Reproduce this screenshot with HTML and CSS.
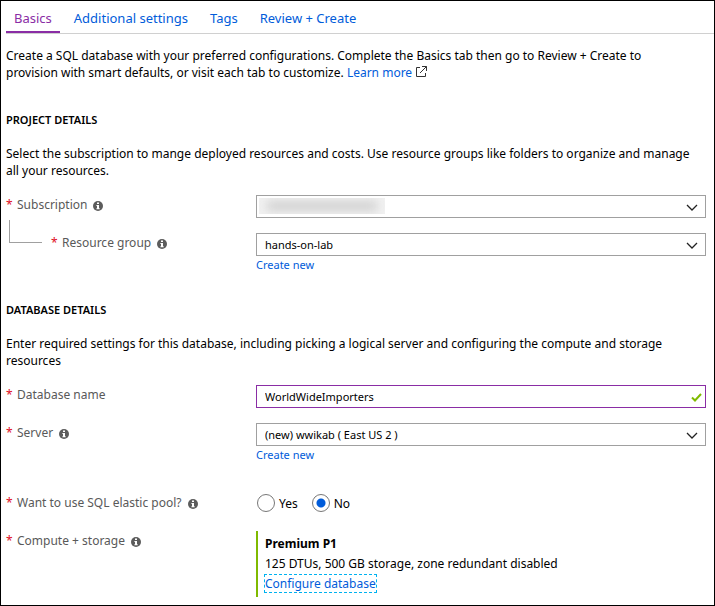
FILE: index.html
```html
<!DOCTYPE html>
<html lang="en">
<head>
<meta charset="utf-8">
<meta name="viewport" content="width=device-width, initial-scale=1">
<title>Create SQL Database</title>
<link rel="stylesheet" href="styles.css">
</head>
<body>
<svg class="sprite" aria-hidden="true">
  <symbol id="info" viewBox="0 0 10 10">
    <circle cx="5" cy="5" r="5" fill="#5c5c5c"/>
    <path d="M4 1.4h2v1.5H4zM3.4 4H6v3.3h.7v1H3.4v-1H4V5h-.6z" fill="#fff"/>
  </symbol>
  <symbol id="chevron" viewBox="0 0 12 8">
    <path d="M1 1l5 5 5-5" fill="none" stroke="#222" stroke-width="1.3"/>
  </symbol>
</svg>

<nav class="tabs">
  <a class="tab tab-active" href="#basics" aria-current="page">Basics</a>
  <a class="tab" href="#settings">Additional settings</a>
  <a class="tab" href="#tags">Tags</a>
  <a class="tab" href="#review">Review + Create</a>
</nav>

<main class="content">
  <p class="text">Create a SQL database with your preferred configurations. Complete the Basics tab then go to Review + Create to provision with smart defaults, or visit each tab to customize. <a class="link" href="#learn">Learn more<svg class="external" viewBox="0 0 11 11" aria-hidden="true"><path d="M4 1.5H.5v9h9V7M6 .5h4.5V5M10.5 .5L4 7" fill="none" stroke="#333"/></svg></a></p>

  <section class="section">
    <h2 class="heading">PROJECT DETAILS</h2>
    <p class="text">Select the subscription to mange deployed resources and costs. Use resource groups like folders to organize and manage all your resources.</p>
    <div class="row row-first">
      <label class="label" for="subscription"><span class="star">*</span>Subscription<svg class="info"><use href="#info"/></svg></label>
      <div class="select">
        <select id="subscription"><option></option></select>
        <span class="redacted"></span>
        <svg class="chevron" aria-hidden="true"><use href="#chevron"/></svg>
      </div>
    </div>
    <div class="row">
      <div class="nested">
        <span class="branch"></span>
        <label class="label" for="group"><span class="star">*</span>Resource group<svg class="info"><use href="#info"/></svg></label>
      </div>
      <div>
        <div class="select">
          <select id="group"><option>hands-on-lab</option></select>
          <svg class="chevron" aria-hidden="true"><use href="#chevron"/></svg>
        </div>
        <a class="link create" href="#new-group">Create new</a>
      </div>
    </div>
  </section>

  <section class="section">
    <h2 class="heading">DATABASE DETAILS</h2>
    <p class="text">Enter required settings for this database, including picking a logical server and configuring the compute and storage resources</p>
    <div class="row row-first">
      <label class="label" for="name"><span class="star">*</span>Database name</label>
      <div class="select">
        <input class="input" id="name" type="text" value="WorldWideImporters">
        <svg class="check" viewBox="0 0 11 9" aria-hidden="true"><path d="M1 4.5l3 3L10 1" fill="none" stroke="#7fba00" stroke-width="2"/></svg>
      </div>
    </div>
    <div class="row">
      <label class="label" for="server"><span class="star">*</span>Server<svg class="info"><use href="#info"/></svg></label>
      <div>
        <div class="select">
          <select id="server"><option>(new) wwikab ( East US 2 )</option></select>
          <svg class="chevron" aria-hidden="true"><use href="#chevron"/></svg>
        </div>
        <a class="link create" href="#new-server">Create new</a>
      </div>
    </div>
    <div class="row row-pool" role="radiogroup" aria-labelledby="pool">
      <span class="label" id="pool"><span class="star">*</span>Want to use SQL elastic pool?<svg class="info"><use href="#info"/></svg></span>
      <div class="radios">
        <label class="radio"><input type="radio" name="pool">Yes</label>
        <label class="radio"><input type="radio" name="pool" checked>No</label>
      </div>
    </div>
    <div class="row row-compute">
      <span class="label"><span class="star">*</span>Compute + storage<svg class="info"><use href="#info"/></svg></span>
      <div class="summary">
        <strong>Premium P1</strong>
        <span>125 DTUs, 500 GB storage, zone redundant disabled</span>
        <a class="link configure" href="#configure">Configure database</a>
      </div>
    </div>
  </section>
</main>
</body>
</html>
```
FILE: styles.css
```css
* {
  box-sizing: border-box;
}

body {
  margin: 0;
  min-height: 100vh;
  border: 1px solid #000;
  padding-left: 5px;
  background: #fff;
  color: #000;
  font: 12px/17px "Noto Sans", "Open Sans", sans-serif;
}

.sprite {
  display: none;
}

.tabs {
  display: flex;
  gap: 6px;
  border-bottom: 1px solid #d0d0d0;
  font-size: 13px;
  line-height: 18px;
}

.tab {
  padding: 8px 8px 4px;
  border-bottom: 2px solid transparent;
  color: #015cda;
  text-decoration: none;
}

.tab-active {
  color: #8a2da5;
  border-color: #8a2da5;
}

.content {
  padding: 13px 8px 8px 0;
}

.text {
  margin: 0;
  padding-right: 16px;
}

.link {
  color: #015cda;
  text-decoration: none;
}

.external {
  width: 11px;
  height: 11px;
  margin-left: 4px;
}

.section {
  padding-top: 30px;
}

.section + .section {
  padding-top: 28px;
}

.heading {
  margin: 0 0 17px;
  font-size: 11px;
  line-height: 17px;
  font-weight: 600;
}

.row {
  display: grid;
  grid-template-columns: 250px minmax(0, 1fr);
  align-items: start;
  margin-top: 15px;
}

.row-first {
  margin-top: 16px;
}

.label {
  display: flex;
  align-items: center;
  height: 18px;
  color: #595959;
}

.star {
  width: 11px;
  color: #e00b1c;
}

.info {
  width: 10px;
  height: 10px;
  margin: 3px 0 0 6px;
}

.nested {
  display: flex;
  gap: 9px;
}

.branch {
  width: 33px;
  height: 23px;
  margin: -13px 0 0 3px;
  border: solid #a0a0a0;
  border-width: 0 0 1px 1px;
}

.select {
  position: relative;
}

select,
.input {
  display: block;
  width: 100%;
  height: 23px;
  margin: 0;
  padding: 0 28px 0 8px;
  border: 1px solid #a0a0a0;
  border-radius: 0;
  outline: 0;
  background: #fff;
  color: #000;
  font: inherit;
  font-size: 11px;
  appearance: none;
}

.input {
  border-color: #8a2da5;
}

.chevron,
.check {
  position: absolute;
  pointer-events: none;
}

.chevron {
  top: 9px;
  right: 8px;
  width: 12px;
  height: 8px;
}

.check {
  top: 8px;
  right: 4px;
  width: 11px;
  height: 9px;
}

.redacted {
  position: absolute;
  top: 3px;
  left: 3px;
  width: 126px;
  height: 16px;
  background: #f1f1f1;
  overflow: hidden;
}

.redacted::before {
  content: "";
  display: block;
  height: 10px;
  margin: 3px 8px;
  background: #d2d2d2;
  filter: blur(5px);
}

.create {
  display: block;
  width: max-content;
  font-size: 11px;
}

.row-pool {
  margin-top: 30px;
}

.radios {
  display: flex;
  gap: 14px;
  padding: 1px;
}

.radio {
  display: flex;
  align-items: center;
  gap: 4px;
  height: 18px;
}

.radio input {
  width: 18px;
  height: 18px;
  margin: 0;
  border: 1px solid #777;
  border-radius: 50%;
  background: #fff;
  appearance: none;
}

.radio input:checked {
  background: radial-gradient(circle, #015cda 4px, #fff 5px);
}

.row-compute {
  margin-top: 18px;
}

.summary {
  display: flex;
  flex-direction: column;
  align-items: flex-start;
  gap: 3px;
  padding: 4px 0 5px 7px;
  border-left: 2px solid #7fba00;
}

.configure {
  outline: 1px dashed #00b2f0;
}
```
